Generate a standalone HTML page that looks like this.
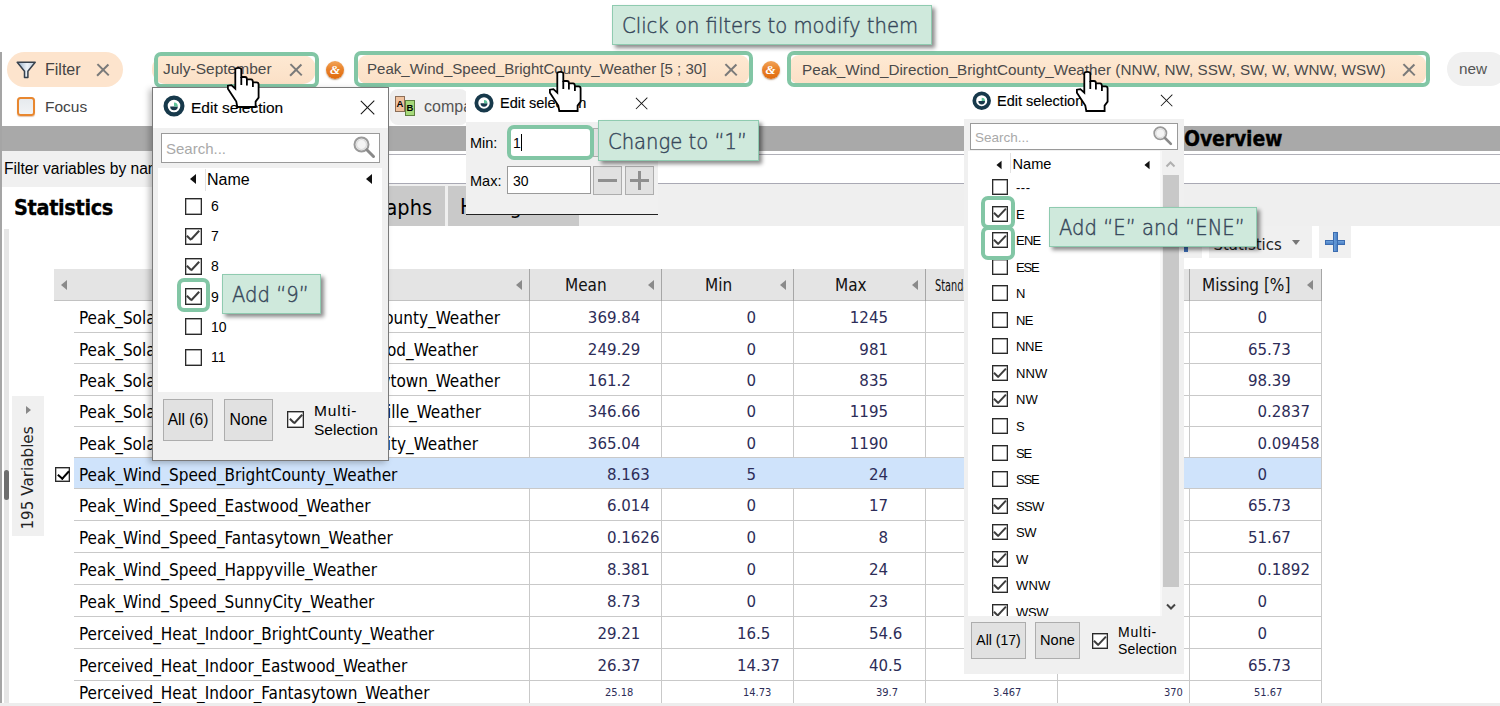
<!DOCTYPE html>
<html><head><meta charset="utf-8"><title>Filters</title>
<style>
*{box-sizing:border-box;margin:0;padding:0}
html,body{width:1500px;height:706px;overflow:hidden;background:#fff}
body{position:relative;font-family:"Liberation Sans",sans-serif;color:#000}
.a{position:absolute}
.ui{font-family:"Liberation Sans",sans-serif}
.tb{font-family:"DejaVu Sans Condensed","DejaVu Sans",sans-serif}
/* table */
.hdr{position:absolute;top:268.5px;height:32.3px;background:#e4e4e4;border-bottom:1px solid #c2c2c2}
.hl{position:absolute;top:268.5px;height:32.3px;width:1px;background:#a6a6a6}
.ht{position:absolute;top:285.4px;transform:translateY(-50%);font-family:"DejaVu Sans Condensed",sans-serif;font-size:17px;color:#111;white-space:nowrap}
.tri{position:absolute;width:0;height:0;border-top:5px solid transparent;border-bottom:5px solid transparent;border-right:6px solid #8a8a8a}
.vl{position:absolute;top:301px;height:402px;width:1px;background:#c9c9c9}
.rline{position:absolute;left:74px;width:1248px;height:1px;background:#c9c9c9}
.selrow{position:absolute;left:74px;width:1247px;background:#cfe3fb}
.nm{position:absolute;left:79px;transform:translateY(-50%);font-family:"DejaVu Sans Condensed",sans-serif;font-size:17px;white-space:nowrap;color:#000}
.nmr{left:auto;right:1000px}
.num{position:absolute;transform:translateY(-50%);font-family:"DejaVu Sans Condensed",sans-serif;font-size:16.7px;white-space:nowrap;color:#2d2d58}
.sm{font-size:11px}
/* chips */
.chip{position:absolute;top:55px;height:29px;background:linear-gradient(#fee9d3,#fbe0c6);border-radius:9px}
.gbox{position:absolute;border:4px solid #82c6a5;border-radius:7px}
.ct{position:absolute;top:68.8px;transform:translateY(-50%);font-size:15.3px;color:#4a4a4a;white-space:nowrap}
.x{position:absolute;width:12px;height:12px}
.x:before,.x:after{content:"";position:absolute;left:5.35px;top:-2px;width:1.5px;height:15.5px;background:#7a7a7a;transform:rotate(45deg)}
.x:after{transform:rotate(-45deg)}
.xb{width:14px;height:14px}
.xb:before,.xb:after{background:#111;height:19px;top:-2.5px;left:6.3px;width:1.4px}
.amp{position:absolute;width:18px;height:18px;border-radius:50%;background:linear-gradient(#f2a55a,#e9822a 45%,#df6a0c);box-shadow:0 1px 1.5px rgba(120,60,0,.5);color:#fff;font-size:13px;font-weight:bold;text-align:center;line-height:18px;font-family:"Liberation Serif",serif;font-style:italic}
/* popups */
.pop{position:absolute;background:#f0f0f0}
.ptitle{position:absolute;transform:translateY(-50%);white-space:nowrap;color:#000;-webkit-text-stroke:0.15px #000}
.eico{position:absolute;width:20px;height:20px;border-radius:50%;border:3.5px solid #16323f;background:#fff}
.eico:after{content:"";position:absolute;left:3px;top:4.5px;width:7px;height:5px;background:#2fa08a;border-radius:0 0 5px 5px}
.sbox{position:absolute;background:#fff;border:1px solid #9a9a9a}
.ph{position:absolute;transform:translateY(-50%);color:#a9a9a9;white-space:nowrap}
.cb{position:absolute;width:17px;height:17px;border:1px solid #2a2a2a;background:#fff;box-shadow:inset 0 0 0 0.4px #555}
.cb3{width:16px;height:16px}
.ck:before{content:"";position:absolute;width:1.8px;height:6px;background:#3c3c3c;left:2.6px;top:6.4px;transform:rotate(-45deg)}
.ck:after{content:"";position:absolute;width:1.8px;height:12.4px;background:#3c3c3c;left:8.5px;top:0.8px;transform:rotate(43deg)}
.rk:after{content:"";position:absolute;left:4.2px;top:0.2px;width:4.5px;height:9px;border:solid #000;border-width:0 2.6px 2.6px 0;transform:rotate(42deg)}
.cb3.ck:before{width:1.7px;height:5.7px;left:2.4px;top:5.9px}
.cb3.ck:after{width:1.7px;height:11.6px;left:7.9px;top:0.7px}
.li1{position:absolute;transform:translateY(-50%);font-size:14px;white-space:nowrap;color:#000}
.li3{position:absolute;transform:translateY(-50%);font-size:13px;white-space:nowrap;color:#000}
.btn{position:absolute;background:#e1e1e1;border:1px solid #adadad;text-align:center;white-space:nowrap;color:#000}
.ltri{position:absolute;width:0;height:0;border-top:5px solid transparent;border-bottom:5px solid transparent;border-right:6.5px solid #111}
/* callouts */
.call{position:absolute;background:#cfe9dc;border:1px solid #8fcbb0;box-shadow:2.5px 2.5px 4px rgba(0,0,0,.45);color:#36475a;font-family:"DejaVu Sans Light","DejaVu Sans",sans-serif;font-weight:200;white-space:nowrap}
.call span{position:absolute;top:50%;transform:translateY(-50%) scaleX(.916);transform-origin:left center;font-size:21.4px;-webkit-text-stroke:0.45px #36475a}
</style></head><body>

<!-- left edge line -->
<div class="a" style="left:0px;top:52px;width:1.5px;height:654px;background:#a5a5a5"></div>

<!-- toolbar row 1 -->
<div class="a" style="left:7px;top:52px;width:116px;height:35px;border-radius:18px;background:#fde4cd"></div>
<svg class="a" style="left:15.7px;top:61px" width="21" height="19" viewBox="0 0 21 19"><defs><linearGradient id="fg" x1="0" y1="0" x2="1" y2="0"><stop offset="0" stop-color="#8fa9c4"/><stop offset=".55" stop-color="#eef3f8"/><stop offset="1" stop-color="#b9c9da"/></linearGradient></defs><path d="M1.2 1.3 H19.2 L11.9 10.2 V16.6 H8.5 V10.2 Z" fill="url(#fg)" stroke="#37414d" stroke-width="1.5" stroke-linejoin="round"/></svg>
<span class="ct" style="left:45px;top:69.8px;font-size:16px;color:#444">Filter</span>
<span class="x" style="left:97px;top:64px"></span>

<div class="chip" style="left:152px;width:164px;border-radius:14px"></div>
<div class="gbox" style="left:154px;top:52px;width:165px;height:35.5px"></div>
<span class="ct" style="left:163px;font-size:15.5px">July-September</span>
<span class="x" style="left:289.5px;top:63.5px"></span>
<span class="amp" style="left:326px;top:60.5px">&amp;</span>

<div class="chip" style="left:358px;width:391px"></div>
<div class="gbox" style="left:354px;top:51px;width:399px;height:36px"></div>
<span class="ct" style="left:367px;top:68.3px;font-size:15.05px">Peak_Wind_Speed_BrightCounty_Weather [5 ; 30]</span>
<span class="x" style="left:725px;top:63.5px"></span>
<span class="amp" style="left:761.5px;top:60.5px">&amp;</span>

<div class="chip" style="left:790px;width:636px"></div>
<div class="gbox" style="left:786.5px;top:51px;width:643.5px;height:36px"></div>
<span class="ct" style="left:802px;font-size:15.25px">Peak_Wind_Direction_BrightCounty_Weather (NNW, NW, SSW, SW, W, WNW, WSW)</span>
<span class="x" style="left:1403px;top:63.5px"></span>

<div class="a" style="left:1447px;top:52px;width:60px;height:34px;border-radius:17px;background:#f0f0f0"></div>
<span class="ct" style="left:1459px;color:#555">new</span>

<!-- toolbar row 2 -->
<div class="a" style="left:17px;top:96.5px;width:18px;height:19px;border:2px solid #e8872f;border-radius:3.5px;background:linear-gradient(#e6eaee,#f1f3f5);box-shadow:0 1px 1px rgba(180,90,20,.35)"></div>
<span class="ct" style="left:45px;top:106.6px;font-size:15.5px;color:#444">Focus</span>
<div class="a" style="left:390px;top:89px;width:78px;height:36px;border-radius:8px;background:#efefef"></div>
<div class="a" style="left:395px;top:96px;width:10px;height:16px;background:#f0c29e;border:1px solid #8c6e58;font:bold 9.5px/14px 'Liberation Sans',sans-serif;text-align:center;color:#000">A</div>
<div class="a" style="left:405px;top:100px;width:10px;height:16px;background:#a6d97a;border:1px solid #5d7f3f;font:bold 9.5px/14px 'Liberation Sans',sans-serif;text-align:center;color:#000">B</div>
<span class="ct" style="left:424px;top:107px;font-size:16px;color:#555">compare</span>

<!-- gray bar -->
<div class="a" style="left:1.5px;top:126px;width:1498.5px;height:25px;background:#a9a9a9"></div>
<span class="a" style="left:1184px;top:139px;transform:translateY(-50%);font-family:'DejaVu Sans Condensed',sans-serif;font-weight:bold;font-size:21px;letter-spacing:-0.15px;-webkit-text-stroke:0.3px #000;color:#000">Overview</span>
<div class="a" style="left:2px;top:154px;width:1498px;height:1px;background:#b0b0b8"></div>
<div class="a" style="left:2px;top:151px;width:386px;height:36px;background:#f0f0f0"></div>
<span class="a ui" style="left:4px;top:169px;transform:translateY(-50%);font-size:15.6px;white-space:nowrap">Filter variables by name</span>
<div class="a" style="left:388px;top:183px;width:1112px;height:1px;background:#a9a9b4"></div>
<!-- tabs row -->
<div class="a" style="left:388px;top:184px;width:1112px;height:42px;background:#efefef"></div>
<div class="a" style="left:350px;top:186px;width:95px;height:40px;background:#c9c9c9"></div>
<div class="a" style="left:448px;top:186px;width:131px;height:40px;background:#c9c9c9"></div>
<span class="a" style="left:14px;top:207px;transform:translateY(-50%);font-family:'DejaVu Sans Condensed',sans-serif;font-weight:bold;font-size:21.5px;letter-spacing:-0.35px;-webkit-text-stroke:0.3px #000">Statistics</span>
<span class="a" style="right:1068px;top:207px;transform:translateY(-50%);font-family:'DejaVu Sans Condensed',sans-serif;font-size:21.5px;white-space:nowrap">Graphs</span>
<span class="a" style="left:460px;top:206px;transform:translateY(-50%);font-family:'DejaVu Sans Condensed',sans-serif;font-size:21.5px;white-space:nowrap">Histogram</span>

<!-- left strip -->
<div class="a" style="left:4px;top:229px;width:5px;height:477px;background:#e6e6e6"></div>
<div class="a" style="left:4px;top:470px;width:5px;height:30px;border-radius:2.5px;background:#6e6e6e"></div>
<div class="a" style="left:12px;top:396px;width:32px;height:140px;background:#f0f0f0"></div>
<span class="a" style="left:28px;top:478px;transform:translate(-50%,-50%) rotate(-90deg);font-family:'DejaVu Sans',sans-serif;font-size:15.2px;white-space:nowrap;color:#222">195 Variables</span>
<div class="a" style="left:26px;top:406px;width:0;height:0;border-top:4px solid transparent;border-bottom:4px solid transparent;border-left:5px solid #888"></div>
<span class="cb rk" style="left:54.5px;top:466.5px;width:15.5px;height:15.5px"></span>

<!-- statistics dropdown + plus -->
<div class="a" style="left:1184px;top:226px;width:18px;height:32px;background:#f0f0f0"></div>
<div class="a" style="left:1184px;top:246px;width:4px;height:6px;background:#3d6db5"></div>
<div class="a" style="left:1209px;top:226px;width:103px;height:32px;background:#f0f0f0"></div>
<span class="a" style="left:1213.5px;top:243.5px;transform:translateY(-50%);font-family:'DejaVu Sans Condensed',sans-serif;font-size:16.6px;color:#222">Statistics</span>
<div class="a" style="left:1292px;top:240px;width:0;height:0;border-left:4.5px solid transparent;border-right:4.5px solid transparent;border-top:5px solid #777"></div>
<div class="a" style="left:1319px;top:226px;width:32px;height:32px;background:#f0f0f0"></div>
<div class="a" style="left:1325px;top:239.5px;width:20px;height:5px;background:linear-gradient(#6fa3dc,#4a7fc5);border:1px solid #3b6cb0"></div>
<div class="a" style="left:1332.5px;top:232px;width:5px;height:20px;background:linear-gradient(90deg,#6fa3dc,#4a7fc5);border:1px solid #3b6cb0"></div>
<div class="a" style="left:1333.5px;top:240.5px;width:3px;height:3px;background:#5d93d2"></div>

<!-- table header -->
<div class="hdr" style="left:54px;width:1268px"></div>
<div class="hl" style="left:529px"></div><div class="hl" style="left:661px"></div><div class="hl" style="left:793px"></div><div class="hl" style="left:925px"></div><div class="hl" style="left:1057px"></div><div class="hl" style="left:1189px"></div><div class="hl" style="left:1321px"></div>
<div class="tri" style="left:60.7px;top:280px"></div>
<div class="tri" style="left:515.7px;top:280px"></div>
<span class="ht" style="left:565px">Mean</span><div class="tri" style="left:647.7px;top:280px"></div>
<span class="ht" style="left:705px">Min</span><div class="tri" style="left:779.7px;top:280px"></div>
<span class="ht" style="left:835px">Max</span><div class="tri" style="left:911.7px;top:280px"></div>
<span class="ht" style="left:935px;font-size:16px;transform:translateY(-50%) scaleX(.68);transform-origin:left center">Standard Deviation</span>
<span class="ht" style="left:1202px">Missing [%]</span><div class="tri" style="left:1306.7px;top:280px"></div>
<!-- column lines -->
<div class="vl" style="left:529px"></div><div class="vl" style="left:661px"></div><div class="vl" style="left:793px"></div><div class="vl" style="left:925px"></div><div class="vl" style="left:1057px"></div><div class="vl" style="left:1189px"></div><div class="vl" style="left:1321px"></div>
<div class="rline" style="top:331.7px"></div>
<span class="nm" style="top:318.1px">Peak_Sola</span>
<span class="nm nmr" style="top:318.1px;right:1000px">BrightCounty_Weather</span>
<span class="num ni" style="right:883.5px;top:317.1px">369</span><span class="num nf" style="left:616.5px;top:317.1px">.84</span>
<span class="num ni" style="right:744.0px;top:317.1px">0</span>
<span class="num ni" style="right:612.0px;top:317.1px">1245</span>
<span class="num ni" style="right:233.0px;top:317.1px">0</span>
<div class="rline" style="top:363.3px"></div>
<span class="nm" style="top:349.6px">Peak_Sola</span>
<span class="nm nmr" style="top:349.6px;right:1022px">Eastwood_Weather</span>
<span class="num ni" style="right:883.5px;top:348.6px">249</span><span class="num nf" style="left:616.5px;top:348.6px">.29</span>
<span class="num ni" style="right:744.0px;top:348.6px">0</span>
<span class="num ni" style="right:612.0px;top:348.6px">981</span>
<span class="num ni" style="right:233.0px;top:348.6px">65</span><span class="num nf" style="left:1267.0px;top:348.6px">.73</span>
<div class="rline" style="top:394.8px"></div>
<span class="nm" style="top:381.2px">Peak_Sola</span>
<span class="nm nmr" style="top:381.2px;right:1000px">Fantasytown_Weather</span>
<span class="num ni" style="right:883.5px;top:380.2px">161</span><span class="num nf" style="left:616.5px;top:380.2px">.2</span>
<span class="num ni" style="right:744.0px;top:380.2px">0</span>
<span class="num ni" style="right:612.0px;top:380.2px">835</span>
<span class="num ni" style="right:233.0px;top:380.2px">98</span><span class="num nf" style="left:1267.0px;top:380.2px">.39</span>
<div class="rline" style="top:425.7px"></div>
<span class="nm" style="top:412.4px">Peak_Sola</span>
<span class="nm nmr" style="top:412.4px;right:1019px">Happyville_Weather</span>
<span class="num ni" style="right:883.5px;top:411.4px">346</span><span class="num nf" style="left:616.5px;top:411.4px">.66</span>
<span class="num ni" style="right:744.0px;top:411.4px">0</span>
<span class="num ni" style="right:612.0px;top:411.4px">1195</span>
<span class="num ni" style="right:233.0px;top:411.4px">0</span><span class="num nf" style="left:1267.0px;top:411.4px">.2837</span>
<div class="rline" style="top:457.0px"></div>
<span class="nm" style="top:443.5px">Peak_Sola</span>
<span class="nm nmr" style="top:443.5px;right:1022px">SunnyCity_Weather</span>
<span class="num ni" style="right:883.5px;top:442.5px">365</span><span class="num nf" style="left:616.5px;top:442.5px">.04</span>
<span class="num ni" style="right:744.0px;top:442.5px">0</span>
<span class="num ni" style="right:612.0px;top:442.5px">1190</span>
<span class="num ni" style="right:233.0px;top:442.5px">0</span><span class="num nf" style="left:1267.0px;top:442.5px">.09458</span>
<div class="selrow" style="top:458.0px;height:30.9px"></div>
<div class="rline" style="top:488.2px"></div>
<span class="nm" style="top:474.7px">Peak_Wind_Speed_BrightCounty_Weather</span>
<span class="num ni" style="right:883.5px;top:473.7px">8</span><span class="num nf" style="left:616.5px;top:473.7px">.163</span>
<span class="num ni" style="right:744.0px;top:473.7px">5</span>
<span class="num ni" style="right:612.0px;top:473.7px">24</span>
<span class="num ni" style="right:233.0px;top:473.7px">0</span>
<div class="rline" style="top:520.2px"></div>
<span class="nm" style="top:506.3px">Peak_Wind_Speed_Eastwood_Weather</span>
<span class="num ni" style="right:883.5px;top:505.3px">6</span><span class="num nf" style="left:616.5px;top:505.3px">.014</span>
<span class="num ni" style="right:744.0px;top:505.3px">0</span>
<span class="num ni" style="right:612.0px;top:505.3px">17</span>
<span class="num ni" style="right:233.0px;top:505.3px">65</span><span class="num nf" style="left:1267.0px;top:505.3px">.73</span>
<div class="rline" style="top:552.0px"></div>
<span class="nm" style="top:538.2px">Peak_Wind_Speed_Fantasytown_Weather</span>
<span class="num ni" style="right:883.5px;top:537.2px">0</span><span class="num nf" style="left:616.5px;top:537.2px">.1626</span>
<span class="num ni" style="right:744.0px;top:537.2px">0</span>
<span class="num ni" style="right:612.0px;top:537.2px">8</span>
<span class="num ni" style="right:233.0px;top:537.2px">51</span><span class="num nf" style="left:1267.0px;top:537.2px">.67</span>
<div class="rline" style="top:583.5px"></div>
<span class="nm" style="top:569.9px">Peak_Wind_Speed_Happyville_Weather</span>
<span class="num ni" style="right:883.5px;top:568.9px">8</span><span class="num nf" style="left:616.5px;top:568.9px">.381</span>
<span class="num ni" style="right:744.0px;top:568.9px">0</span>
<span class="num ni" style="right:612.0px;top:568.9px">24</span>
<span class="num ni" style="right:233.0px;top:568.9px">0</span><span class="num nf" style="left:1267.0px;top:568.9px">.1892</span>
<div class="rline" style="top:616.3px"></div>
<span class="nm" style="top:602.0px">Peak_Wind_Speed_SunnyCity_Weather</span>
<span class="num ni" style="right:883.5px;top:601.0px">8</span><span class="num nf" style="left:616.5px;top:601.0px">.73</span>
<span class="num ni" style="right:744.0px;top:601.0px">0</span>
<span class="num ni" style="right:612.0px;top:601.0px">23</span>
<span class="num ni" style="right:233.0px;top:601.0px">0</span>
<div class="rline" style="top:648.1px"></div>
<span class="nm" style="top:634.3px">Perceived_Heat_Indoor_BrightCounty_Weather</span>
<span class="num ni" style="right:883.5px;top:633.3px">29</span><span class="num nf" style="left:616.5px;top:633.3px">.21</span>
<span class="num ni" style="right:744.0px;top:633.3px">16</span><span class="num nf" style="left:756.0px;top:633.3px">.5</span>
<span class="num ni" style="right:612.0px;top:633.3px">54</span><span class="num nf" style="left:888.0px;top:633.3px">.6</span>
<span class="num ni" style="right:233.0px;top:633.3px">0</span>
<div class="rline" style="top:679.9px"></div>
<span class="nm" style="top:666.1px">Perceived_Heat_Indoor_Eastwood_Weather</span>
<span class="num ni" style="right:883.5px;top:665.1px">26</span><span class="num nf" style="left:616.5px;top:665.1px">.37</span>
<span class="num ni" style="right:744.0px;top:665.1px">14</span><span class="num nf" style="left:756.0px;top:665.1px">.37</span>
<span class="num ni" style="right:612.0px;top:665.1px">40</span><span class="num nf" style="left:888.0px;top:665.1px">.5</span>
<span class="num ni" style="right:233.0px;top:665.1px">65</span><span class="num nf" style="left:1267.0px;top:665.1px">.73</span>
<!-- last squished row -->
<span class="nm" style="top:693px">Perceived_Heat_Indoor_Fantasytown_Weather</span>
<span class="num sm" style="left:605px;top:692px">25.18</span>
<span class="num sm" style="left:743px;top:692px">14.73</span>
<span class="num sm" style="left:876px;top:692px">39.7</span>
<span class="num sm" style="left:993px;top:692px">3.467</span>
<span class="num sm" style="left:1164px;top:692px">370</span>
<span class="num sm" style="left:1254px;top:692px">51.67</span>
<div class="a" style="left:0;top:702.5px;width:1500px;height:3.5px;background:#ededed"></div>

<!-- POPUP 1 -->
<div class="a" style="left:152px;top:87px;width:237px;height:374px;background:#f0f0f0;border:1px solid #7a7a7a;box-shadow:-3px 2px 6px rgba(0,0,0,.25)"></div>
<div class="a" style="left:153px;top:88px;width:235px;height:40px;background:#fff"></div>
<svg class="a" style="left:163.2px;top:95.2px" width="22" height="22" viewBox="0 0 22 22"><use href="#edit"/></svg>
<span class="ptitle ui" style="left:191px;top:107.5px;font-size:15.5px">Edit selection</span>
<span class="x xb" style="left:361px;top:100px"></span>
<div class="sbox" style="left:161px;top:133px;width:219px;height:30px"></div>
<span class="ph ui" style="left:166px;top:148px;font-size:15px">Search...</span>
<svg class="a" style="left:352px;top:135px" width="24" height="24" viewBox="0 0 24 24"><use href="#mag"/></svg>
<div class="a" style="left:158px;top:168px;width:224px;height:224px;background:#fff"></div>
<div class="a" style="left:205px;top:169px;width:1px;height:22px;background:#e2e2e2"></div>
<div class="ltri" style="left:189.5px;top:173.5px"></div>
<div class="ltri" style="left:366px;top:173.5px"></div>
<span class="li1" style="left:207px;top:180px;font-size:16px">Name</span>
<span class="cb" style="left:184.5px;top:197.5px"></span><span class="li1" style="left:211px;top:206.0px">6</span>
<span class="cb ck" style="left:184.5px;top:227.7px"></span><span class="li1" style="left:211px;top:236.2px">7</span>
<span class="cb ck" style="left:184.5px;top:257.9px"></span><span class="li1" style="left:211px;top:266.4px">8</span>
<span class="cb ck" style="left:184.5px;top:288.1px"></span><span class="li1" style="left:211px;top:296.6px">9</span>
<span class="cb" style="left:184.5px;top:318.3px"></span><span class="li1" style="left:211px;top:326.8px">10</span>
<span class="cb" style="left:184.5px;top:348.5px"></span><span class="li1" style="left:211px;top:357.0px">11</span>
<div class="btn ui" style="left:163px;top:399px;width:50px;height:42px;font-size:15.6px;line-height:40px">All (6)</div>
<div class="btn ui" style="left:224px;top:399px;width:49px;height:42px;font-size:15.8px;line-height:40px">None</div>
<span class="cb ck" style="left:287px;top:411px"></span>
<span class="li1" style="left:314px;top:411px;font-size:15.5px;letter-spacing:0.9px">Multi-</span>
<span class="li1" style="left:314px;top:430px;font-size:15.5px">Selection</span>
<div class="gbox" style="left:176.5px;top:277.5px;width:33.5px;height:34.5px;border-width:4px;border-radius:7px"></div>
<div class="call" style="left:222px;top:274px;width:99px;height:40px;font-size:22px"><span style="left:9px">Add “9”</span></div>

<!-- POPUP 2 -->
<div class="a" style="left:466px;top:88px;width:192px;height:34px;background:#fff"></div>
<div class="a" style="left:466px;top:122px;width:192px;height:92.5px;background:#f0f0f0"></div>
<div class="a" style="left:466px;top:214px;width:192px;height:1px;background:#222"></div>
<svg class="a" style="left:474.4px;top:93.2px" width="20" height="20" viewBox="0 0 22 22"><use href="#edit"/></svg>
<span class="ptitle ui" style="left:500px;top:103px;font-size:14.5px">Edit selection</span>
<span class="x xb" style="left:635px;top:96px;transform:scale(.85)"></span>
<span class="li1" style="left:470px;top:143px;font-size:14.5px">Min:</span>
<span class="li1" style="left:470px;top:181px;font-size:14.5px">Max:</span>
<div class="sbox" style="left:509px;top:127px;width:82px;height:30px"></div>
<div class="btn" style="left:593px;top:128px;width:29px;height:29px"></div>
<div class="gbox" style="left:507px;top:124.5px;width:86.5px;height:35px;border-width:4px;border-radius:7px"></div>
<span class="li1" style="left:513px;top:143px;font-size:14px">1</span>
<div class="a" style="left:521px;top:134px;width:1px;height:17px;background:#000"></div>
<div class="sbox" style="left:507px;top:166px;width:84px;height:28px"></div>
<span class="li1" style="left:513px;top:181px;font-size:14px">30</span>
<div class="btn" style="left:593px;top:166px;width:29px;height:29px"></div>
<div class="a" style="left:598px;top:179px;width:19px;height:2.5px;background:#8f8f8f"></div>
<div class="btn" style="left:625px;top:166px;width:29px;height:29px"></div>
<div class="a" style="left:630px;top:179px;width:19px;height:2.5px;background:#8f8f8f"></div>
<div class="a" style="left:638.3px;top:171px;width:2.5px;height:19px;background:#8f8f8f"></div>
<div class="call" style="left:598px;top:120px;width:161px;height:41px;font-size:22px"><span style="left:9px">Change to “1”</span></div>

<!-- POPUP 3 -->
<div class="a" style="left:964px;top:88px;width:220px;height:32px;background:#fff"></div>
<div class="a" style="left:964px;top:119px;width:220px;height:555px;background:#f0f0f0"></div>
<svg class="a" style="left:972.2px;top:90.8px" width="19.4" height="19.4" viewBox="0 0 22 22"><use href="#edit"/></svg>
<span class="ptitle ui" style="left:997px;top:100.5px;font-size:14.5px">Edit selection</span>
<span class="x xb" style="left:1160px;top:93px;transform:scale(.85)"></span>
<div class="sbox" style="left:970px;top:123px;width:208px;height:26.5px"></div>
<span class="ph ui" style="left:975px;top:137px;font-size:13.5px">Search...</span>
<svg class="a" style="left:1152px;top:125px" width="21" height="21" viewBox="0 0 24 24"><use href="#mag"/></svg>
<div class="a" style="left:968px;top:151px;width:192px;height:465px;background:#fff"></div>
<div class="a" style="left:1160px;top:151px;width:2px;height:465px;background:#f8f8f8"></div>
<div class="a" style="left:1162px;top:151px;width:17px;height:465px;background:#f0f0f0"></div>
<div class="a" style="left:1162.5px;top:174.5px;width:16.5px;height:412.5px;background:#c8c8c8"></div>
<div class="a" style="left:1010px;top:153px;width:1px;height:20px;background:#e2e2e2"></div>
<div class="ltri" style="left:996px;top:159.5px;transform:scale(.85)"></div>
<div class="ltri" style="left:1144px;top:159.5px;transform:scale(.85)"></div>
<span class="li3" style="left:1012.5px;top:164px;font-size:14.6px;letter-spacing:0">Name</span>
<svg class="a" style="left:1165px;top:160px" width="11" height="8" viewBox="0 0 11 8"><path d="M1.5 6.5 L5.5 2.5 L9.5 6.5" fill="none" stroke="#b0b0b0" stroke-width="2"/></svg>
<svg class="a" style="left:1166px;top:603px" width="11" height="8" viewBox="0 0 11 8"><path d="M1 1.5 L5 5.5 L9 1.5" fill="none" stroke="#444" stroke-width="2"/></svg>
<div class="a" style="left:968px;top:176px;width:194px;height:440px;overflow:hidden"><div class="a" style="left:-968px;top:-176px;width:1500px;height:706px">
<span class="cb cb3" style="left:991.7px;top:179.0px"></span><span class="li3" style="left:1016px;top:187.0px;letter-spacing:0.52px">---</span>
<span class="cb cb3 ck" style="left:991.7px;top:205.6px"></span><span class="li3" style="left:1016px;top:213.6px;letter-spacing:-1.26px">E</span>
<span class="cb cb3 ck" style="left:991.7px;top:232.1px"></span><span class="li3" style="left:1016px;top:240.1px;letter-spacing:-0.77px">ENE</span>
<span class="cb cb3" style="left:991.7px;top:258.6px"></span><span class="li3" style="left:1016px;top:266.6px;letter-spacing:-1.19px">ESE</span>
<span class="cb cb3" style="left:991.7px;top:285.2px"></span><span class="li3" style="left:1016px;top:293.2px;letter-spacing:0.20px">N</span>
<span class="cb cb3" style="left:991.7px;top:311.8px"></span><span class="li3" style="left:1016px;top:319.8px;letter-spacing:-0.53px">NE</span>
<span class="cb cb3" style="left:991.7px;top:338.3px"></span><span class="li3" style="left:1016px;top:346.3px;letter-spacing:-0.28px">NNE</span>
<span class="cb cb3 ck" style="left:991.7px;top:364.9px"></span><span class="li3" style="left:1016px;top:372.9px;letter-spacing:0.16px">NNW</span>
<span class="cb cb3 ck" style="left:991.7px;top:391.4px"></span><span class="li3" style="left:1016px;top:399.4px;letter-spacing:0.13px">NW</span>
<span class="cb cb3" style="left:991.7px;top:418.0px"></span><span class="li3" style="left:1016px;top:426.0px;letter-spacing:-1.06px">S</span>
<span class="cb cb3" style="left:991.7px;top:444.5px"></span><span class="li3" style="left:1016px;top:452.5px;letter-spacing:-1.16px">SE</span>
<span class="cb cb3" style="left:991.7px;top:471.1px"></span><span class="li3" style="left:1016px;top:479.1px;letter-spacing:-1.13px">SSE</span>
<span class="cb cb3 ck" style="left:991.7px;top:497.6px"></span><span class="li3" style="left:1016px;top:505.6px;letter-spacing:-0.69px">SSW</span>
<span class="cb cb3 ck" style="left:991.7px;top:524.2px"></span><span class="li3" style="left:1016px;top:532.2px;letter-spacing:-0.50px">SW</span>
<span class="cb cb3 ck" style="left:991.7px;top:550.7px"></span><span class="li3" style="left:1016px;top:558.7px;letter-spacing:0.06px">W</span>
<span class="cb cb3 ck" style="left:991.7px;top:577.2px"></span><span class="li3" style="left:1016px;top:585.2px;letter-spacing:0.11px">WNW</span>
<span class="cb cb3 ck" style="left:991.7px;top:603.8px"></span><span class="li3" style="left:1016px;top:611.8px;letter-spacing:-0.31px">WSW</span>
</div></div>
<div class="btn ui" style="left:971px;top:622px;width:55px;height:37px;font-size:14px;line-height:35px">All (17)</div>
<div class="btn ui" style="left:1035px;top:622px;width:45px;height:37px;font-size:14.6px;line-height:35px">None</div>
<span class="cb cb3 ck" style="left:1092px;top:633px"></span>
<span class="li3" style="left:1118px;top:632px;font-size:14px;letter-spacing:0.8px">Multi-</span>
<span class="li3" style="left:1118px;top:649px;font-size:14px;letter-spacing:0.15px">Selection</span>
<div class="gbox" style="left:981px;top:195.5px;width:34px;height:33.5px;border-width:4px;border-radius:7px"></div>
<div class="gbox" style="left:981px;top:226px;width:34px;height:33.5px;border-width:4px;border-radius:7px"></div>
<div class="call" style="left:1049px;top:206.5px;width:208px;height:40px;font-size:22px"><span style="left:9px">Add “E” and “ENE”</span></div>

<!-- top callout -->
<div class="call" style="left:612px;top:5px;width:320px;height:40px;font-size:22px"><span style="left:9px">Click on filters to modify them</span></div>

<!-- cursors -->
<svg class="a" style="left:225px;top:66px" width="36" height="44" viewBox="0 0 36 44"><use href="#hand"/></svg>
<svg class="a" style="left:547.3px;top:70px" width="36" height="44" viewBox="0 0 36 44"><use href="#hand"/></svg>
<svg class="a" style="left:1074px;top:70px" width="36" height="44" viewBox="0 0 36 44"><use href="#hand"/></svg>
<svg width="0" height="0" style="position:absolute"><defs><g id="edit"><circle cx="11" cy="11" r="8.4" fill="#fff" stroke="#17394b" stroke-width="4.2"/><path d="M7.2 11.4 A3.8 3.8 0 0 0 14.8 11.4 Z" fill="#17394b"/><path d="M11 11.4 V7.6 A3.8 3.8 0 0 1 14.8 11.4 Z" fill="#5fc49a"/></g><g id="mag"><circle cx="9.5" cy="9.5" r="7" fill="#f4f4f4" stroke="#9a9a9a" stroke-width="2"/><circle cx="9.5" cy="9.5" r="5" fill="none" stroke="#dcdcdc" stroke-width="1.2"/><path d="M14.8 14.8 L21.5 21.5" stroke="#8a8a8a" stroke-width="3" stroke-linecap="round"/></g><g id="hand"><path d="M10.3 22.7 V3.6 Q10.3 1.9 13.3 1.9 Q16.3 1.9 16.3 3.6 V11 H20 Q21.9 11 21.9 13.3 H26 Q27.9 13.3 27.9 16.3 H31.5 Q33.6 16.3 33.6 18.5 V31.6 L30.6 35.6 V41 H12.3 L11.3 35.6 L2.9 22.7 V19.7 L6.4 19.2 Z" fill="#fff" stroke="#000" stroke-width="1.8" stroke-linejoin="miter"/><path d="M16.3 11 V19 M21.9 13.3 V19.5 M27.9 16.3 V21" fill="none" stroke="#000" stroke-width="1.8"/></g></defs></svg>
</body></html>
